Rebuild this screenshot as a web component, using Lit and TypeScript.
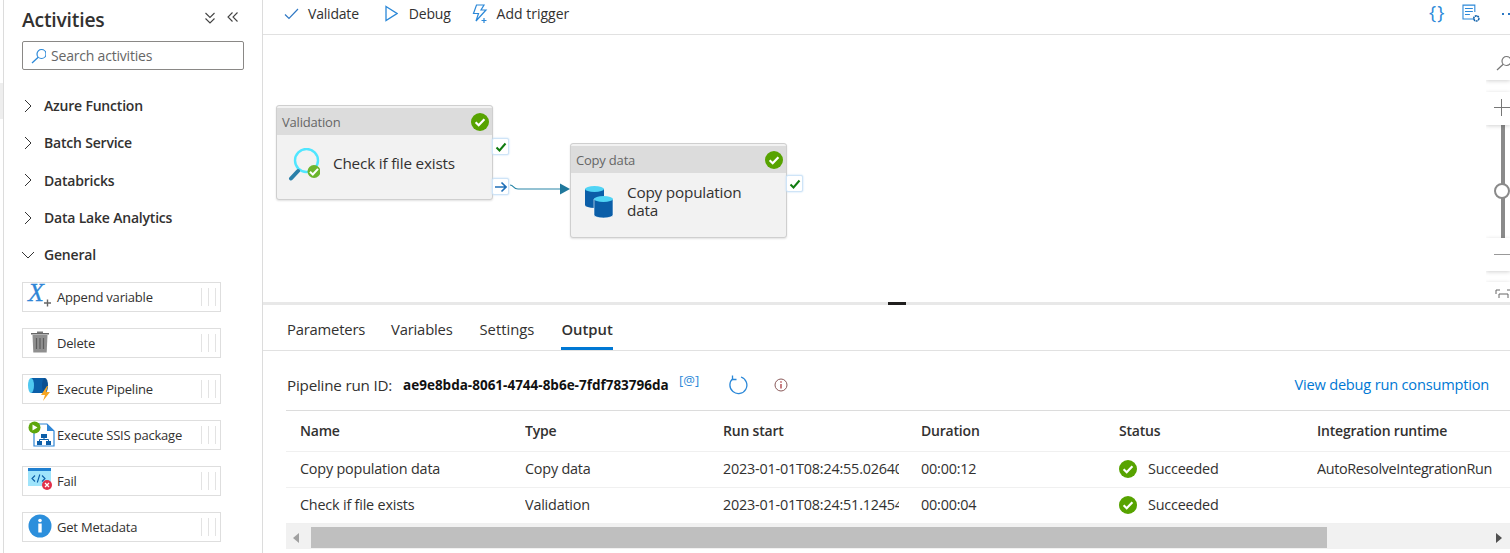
import { LitElement, css, html, svg } from 'lit';
import { customElement } from 'lit/decorators.js';

const groups = ['Azure Function', 'Batch Service', 'Databricks', 'Data Lake Analytics'];

const check = svg`<path d="M-4 0.3 L-1.2 3 L4 -2.6" fill="none" stroke="#fff" stroke-width="2"/>`;

const activityIcons = {
    append: svg`
        <text x="0" y="18" font-family="Liberation Serif, serif" font-style="italic" font-size="26" fill="#2f86d6" stroke="#2f86d6" stroke-width=".3">X</text>
        <path d="M16 20h7M19.500 16.500v7" stroke="#666" stroke-width="1.400" fill="none"/>`,
    delete: svg`
        <path d="M3 4h18v1.500H3z" fill="#666"/><path d="M9 2.500h6V4H9z" fill="#777"/>
        <path d="M4.500 6h15l-.8 17.500H5.300z" fill="#8f8f8f"/>
        <path d="M8.500 9v11M12 9v11M15.500 9v11" stroke="#5c5c5c" stroke-width="1.200"/>`,
    pipeline: svg`
        <g transform="translate(-3 1)">
            <path d="M6 2h14v15H6z" fill="#0b5ea8"/>
            <ellipse cx="6" cy="9.500" rx="3" ry="7.500" fill="#50c8f0"/>
            <ellipse cx="20" cy="9.500" rx="3" ry="7.500" fill="#0a4f91"/>
            <path d="M22 10l-6 9h4l-2 6 7-9h-4l2-6z" fill="#f6a623"/>
        </g>`,
    ssis: svg`
        <path d="M6 3h13l7 7v15H6z" fill="#fff" stroke="#2f86d6" stroke-width="1.200"/>
        <path d="M19 3l7 7h-7z" fill="#2f86d6"/>
        <path d="M13 13h6v4h-6zM9 20h5v4H9zM18 20h5v4h-5z" fill="#0b5ea8"/>
        <path d="M16 17v2M11.500 20v-1.500h9V20" stroke="#0b5ea8" fill="none"/>
        <circle cx="6.500" cy="6.500" r="6" fill="#5ea60c"/><path d="M4.500 3.500v6l5-3z" fill="#fff"/>`,
    fail: svg`
        <path d="M0 1h23v3H0z" fill="#1f7fd0"/><path d="M0 4h23v15H0z" fill="#9fe4fb"/>
        <path d="M7 8.500l-3 3 3 3M14 8.500l3 3-3 3M11.800 7.500l-2.500 8" stroke="#0b5ea8" stroke-width="1.100" fill="none"/>
        <circle cx="19" cy="18" r="5" fill="#e2304a"/>
        <path d="M17 16l4 4M21 16l-4 4" stroke="#fff" stroke-width="1.300"/>`,
    info: svg`
        <circle cx="12" cy="13" r="11.500" fill="#2c8fdc"/>
        <circle cx="12" cy="7.500" r="1.800" fill="#fff"/><path d="M10.300 10.500h3.400v9h-3.400z" fill="#fff"/>`,
};

const activities = [
    ['Append variable', activityIcons.append],
    ['Delete', activityIcons.delete],
    ['Execute Pipeline', activityIcons.pipeline],
    ['Execute SSIS package', activityIcons.ssis],
    ['Fail', activityIcons.fail],
    ['Get Metadata', activityIcons.info],
] as const;

const searchIcon = svg`<circle cx="11.500" cy="6" r="4.500" fill="none" stroke="currentColor" stroke-width="1.200"/><path d="M8.200 9.300L2 15" stroke="currentColor" stroke-width="1.300" fill="none"/>`;

const validationIcon = svg`
    <circle cx="19.500" cy="12.500" r="11.500" fill="none" stroke="#50e6ff" stroke-width="2.400"/>
    <path d="M11 23l-7 7.500" stroke="#2a7fa8" stroke-width="4" stroke-linecap="round"/>
    <circle cx="27" cy="23.500" r="6.500" fill="#6cb52d"/>
    <g transform="translate(27 23.500)">${check}</g>`;

const copyIcon = svg`
    <path d="M0 3h19v16a9.500 3 0 0 1-19 0z" fill="#0b5ea8"/>
    <ellipse cx="9.500" cy="3" rx="9.500" ry="3" fill="#50d4f5"/>
    <path d="M9 13h19v16a9.500 3 0 0 1-19 0z" fill="#0b5ea8" stroke="#fff" stroke-width=".6"/>
    <ellipse cx="18.500" cy="13" rx="9.500" ry="3" fill="#50d4f5"/>`;

const nodes = [
    { x: 276, y: 105, type: 'Validation', label: 'Check if file exists', icon: validationIcon, w: 33, h: 33, left: 11, arrow: true },
    { x: 570, y: 143, type: 'Copy data', label: 'Copy population data', icon: copyIcon, w: 30, h: 34, left: 15, arrow: false },
];

const columns = ['Name', 'Type', 'Run start', 'Duration', 'Status', 'Integration runtime'];
const runs = [
    ['Copy population data', 'Copy data', '2023-01-01T08:24:55.0264083Z', '00:00:12', 'Succeeded', 'AutoResolveIntegrationRun'],
    ['Check if file exists', 'Validation', '2023-01-01T08:24:51.1245491Z', '00:00:04', 'Succeeded', ''],
];

@customElement('app-root')
export class AppRoot extends LitElement {
    renderSideButtons(arrow: boolean) {
        return html`
            <div class="side-btn ok">
                <svg width="12" height="12" viewBox="0 0 12 12"><path d="M1.500 6.500L4.500 9.500L10.500 2.500" fill="none" stroke="#107c10" stroke-width="2"/></svg>
            </div>
            ${arrow ? html`<div class="side-btn go">
                <svg width="12" height="12" viewBox="0 0 12 12"><path d="M0 6h11M6.500 1.500L11 6l-4.500 4.500" fill="none" stroke="#1f6fb8" stroke-width="1.600"/></svg>
            </div>` : ''}`;
    }

    renderNode(n: (typeof nodes)[number]) {
        return html`
            <div class="node ${n.arrow ? 'short' : 'long'}" style="left:${n.x}px;top:${n.y}px">
                <div class="node-head">
                    <span>${n.type}</span>
                    <svg width="18" height="18" viewBox="-9 -9 18 18"><circle r="9" fill="#57a300"/><g transform="scale(1.100)">${check}</g></svg>
                </div>
                <div class="node-body">
                    <svg class="node-icon" style="margin-left:${n.left - 1}px" width="${n.w}" height="${n.h}" viewBox="0 0 ${n.w} ${n.h}">${n.icon}</svg>
                    <div class="node-label">${n.label}</div>
                </div>
                ${this.renderSideButtons(n.arrow)}
            </div>`;
    }

    render() {
        return html`
            <aside class="sidebar">
                <div class="title-row">
                    <h1>Activities</h1>
                    <svg class="collapse" width="34" height="14" viewBox="0 0 34 14">
                        <path d="M1.500 2l4.500 4.500L10.500 2M1.500 7.500L6 12l4.500-4.500M28.500 1.500L24 6l4.500 4.500M33.500 1.500L29 6l4.500 4.500" fill="none" stroke="#444" stroke-width="1.100"/>
                    </svg>
                </div>
                <label class="search">
                    <svg width="16" height="16" viewBox="0 0 16 16">${searchIcon}</svg>
                    <span>Search activities</span>
                </label>
                <div class="groups">
                    ${groups.map((g) => html`
                        <div class="group">
                            <svg width="12" height="14" viewBox="0 0 12 14"><path d="M3 1l6 6-6 6" fill="none" stroke="#333" stroke-width="1"/></svg>
                            <span>${g}</span>
                        </div>`)}
                    <div class="group">
                        <svg width="12" height="14" viewBox="0 0 12 14"><path d="M0 4l6 6 6-6" fill="none" stroke="#333" stroke-width="1"/></svg>
                        <span>General</span>
                    </div>
                </div>
                <div class="items">
                    ${activities.map(([name, icon]) => html`
                        <div class="item">
                            <svg class="item-icon" width="26" height="26" viewBox="0 0 26 26">${icon}</svg>
                            <span>${name}</span>
                            <i class="grip"></i>
                        </div>`)}
                </div>
            </aside>
            <main class="main">
                <div class="toolbar">
                    <div class="tool first">
                        <svg width="15" height="12" viewBox="0 0 15 12"><path d="M1 6.500L5 10.500L14 1" fill="none" stroke="#2f78c4" stroke-width="1.200"/></svg>
                        <span>Validate</span>
                    </div>
                    <div class="tool second">
                        <svg width="13" height="17" viewBox="0 0 13 17"><path d="M1 1.500L12 8.500L1 15.500z" fill="none" stroke="#2b88d8" stroke-width="1.300"/></svg>
                        <span>Debug</span>
                    </div>
                    <div class="tool tight">
                        <svg width="17" height="20" viewBox="0 0 17 20"><path d="M4.500 1h7.500l-3 5h5L4 17l2.500-7.500H1.500zM12 14v5M9.500 16.500h5" fill="none" stroke="#2b88d8" stroke-width="1.200"/></svg>
                        <span>Add trigger</span>
                    </div>
                    <div class="tool-right">
                        <span class="braces">{}</span>
                        <svg width="19" height="19" viewBox="0 0 19 19">
                            <path d="M13 15H1V1h12v7M3 4.500h8M3 7.500h8M3 10.500h5" fill="none" stroke="#2b88d8" stroke-width="1.100"/>
                            <circle cx="14.500" cy="14.500" r="2.600" fill="none" stroke="#0b5ea8" stroke-width="1.600" stroke-dasharray="2 .6"/>
                        </svg>
                        <span class="more"><i></i><i></i></span>
                    </div>
                </div>
                <div class="canvas">
                    <svg class="wire" width="64" height="16" viewBox="0 0 64 16">
                        <path d="M0 4C4 4 3 8 8 8H52" fill="none" stroke="#2a86a8" stroke-width="1.200"/>
                        <path d="M50 2.500L60 8L50 13.500z" fill="#20789c"/>
                    </svg>
                    ${nodes.map((n) => this.renderNode(n))}
                    <div class="zoom-tools">
                        <div class="zoom-btn search-btn">
                            <svg width="16" height="16" viewBox="0 0 16 16" style="color:#777">${searchIcon}</svg>
                        </div>
                        <div class="zoom-btn plus"><i></i><b></b></div>
                        <div class="track"><span class="thumb"></span></div>
                        <div class="zoom-btn minus"><i></i></div>
                        <div class="zoom-btn fit">
                            <svg width="17" height="15" viewBox="0 0 17 15"><path d="M1 5V1h4M12 1h4M4 13V5h9v8" fill="none" stroke="#666" stroke-width="1"/></svg>
                        </div>
                    </div>
                </div>
                <div class="splitter"><span></span></div>
                <div class="tabs">
                    <span class="tab">Parameters</span>
                    <span class="tab">Variables</span>
                    <span class="tab settings">Settings</span>
                    <span class="tab active">Output</span>
                </div>
                <div class="run-row">
                    <span class="run-label">Pipeline run ID:</span>
                    <span class="run-id">ae9e8bda-8061-4744-8b6e-7fdf783796da</span>
                    <span class="at">[@]</span>
                    <svg class="refresh" width="20" height="20" viewBox="0 0 20 20">
                        <path d="M5 3.500A8.500 8.500 0 1 0 13 2" fill="none" stroke="#2b88d8" stroke-width="1.300"/>
                        <path d="M4.500 0.500V4.500H8.500" fill="none" stroke="#2b88d8" stroke-width="1.300"/>
                    </svg>
                    <svg class="info" width="14" height="14" viewBox="0 0 14 14">
                        <circle cx="7" cy="7" r="6" fill="none" stroke="#8a5a5a" stroke-width="1"/>
                        <path d="M7 6v4.500" stroke="#a4262c" stroke-width="1.200"/><circle cx="7" cy="4" r=".8" fill="#a4262c"/>
                    </svg>
                    <a class="consumption">View debug run consumption</a>
                </div>
                <div class="table">
                    <div class="row head">${columns.map((c) => html`<div class="cell">${c}</div>`)}</div>
                    ${runs.map((r) => html`
                        <div class="row">
                            ${r.map((v, i) => i === 4
                                ? html`<div class="cell status">
                                    <svg width="18" height="18" viewBox="-9 -9 18 18"><circle r="9" fill="#57a300"/><g transform="scale(1.100)">${check}</g></svg>
                                    <span>${v}</span>
                                </div>`
                                : html`<div class="cell">${v}</div>`)}
                        </div>`)}
                    <div class="scrollbar">
                        <span class="arrow left"></span>
                        <span class="bar"></span>
                        <span class="arrow right"></span>
                    </div>
                </div>
            </main>
            <span class="edge"></span>
        `;
    }

    static override styles = css`
        :host {
            display: flex;
            position: relative;
            width: 1510px;
            height: 553px;
            overflow: hidden;
            background: #fff;
            font-family: 'Open Sans', 'Noto Sans', sans-serif;
            color: #323130;
            letter-spacing: -0.2px;
        }

        .edge {
            position: absolute;
            left: 0;
            top: 83px;
            width: 3px;
            height: 36px;
            background: #eeeeee;
        }

        .sidebar {
            box-sizing: border-box;
            flex: 0 0 260px;
            margin-left: 3px;
            padding-left: 18px;
            border-left: 1px solid #dcdcdc;
            border-right: 1px solid #dcdcdc;
        }

        .title-row {
            display: flex;
            align-items: center;
            height: 41px;
            padding-bottom: 2px;
            box-sizing: border-box;
        }

        h1 {
            margin: 0;
            font-size: 19.3px;
            font-weight: 600;
        }

        .collapse {
            margin: 0 24px 4px auto;
        }

        .search {
            box-sizing: border-box;
            display: flex;
            align-items: center;
            gap: 5px;
            width: 222px;
            height: 29px;
            padding-left: 7px;
            border: 1px solid #8a8886;
            border-radius: 2px;
            color: #666;
            font-size: 14px;
        }

        .search svg {
            color: #2b88d8;
        }

        .groups {
            margin-top: 17px;
        }

        .group {
            display: flex;
            align-items: center;
            gap: 10px;
            height: 37.3px;
            font-size: 14px;
            font-weight: 600;
        }

        .group svg {
            flex: none;
        }

        .items {
            display: flex;
            flex-direction: column;
            gap: 16px;
            margin-top: 9px;
        }

        .item {
            box-sizing: border-box;
            position: relative;
            display: flex;
            align-items: center;
            gap: 3px;
            width: 199px;
            height: 30px;
            padding-left: 5px;
            border: 1px solid #dedede;
            font-size: 13px;
        }

        .item-icon {
            flex: none;
            margin-top: -2px;
            overflow: visible;
        }

        .grip {
            margin-left: auto;
            margin-right: 4px;
            width: 13px;
            height: 18px;
            border-left: 1px solid #e3e3e3;
            border-right: 1px solid #e3e3e3;
            background: linear-gradient(#e3e3e3, #e3e3e3) center / 1px 100% no-repeat;
        }

        .main {
            flex: 1;
            min-width: 0;
            display: flex;
            flex-direction: column;
        }

        .toolbar {
            box-sizing: border-box;
            display: flex;
            align-items: center;
            flex: 0 0 35px;
            padding: 0 0 7px 21px;
            border-bottom: 1px solid #e1e1e1;
            font-size: 14px;
        }

        .tool {
            display: flex;
            align-items: center;
            gap: 11px;
            margin-right: 25px;
        }

        .tool.first {
            gap: 9px;
            margin-right: 26px;
        }

        .tool.tight {
            gap: 8px;
            margin-right: 0;
            margin-left: -4px;
            letter-spacing: 0;
        }

        .tool-right {
            display: flex;
            align-items: center;
            margin-left: auto;
            gap: 17px;
            width: 81px;
        }

        .braces {
            color: #2b88d8;
            font-size: 19px;
            letter-spacing: 1px;
            line-height: 20px;
            margin-top: -4px;
        }

        .more {
            display: flex;
            gap: 4px;
            margin-left: 4px;
        }

        .more i {
            width: 2px;
            height: 2px;
            background: #2b78c4;
        }

        .canvas {
            flex: 0 0 267px;
            overflow: hidden;
        }

        .wire {
            position: absolute;
            left: 510px;
            top: 181px;
        }

        .node {
            position: absolute;
            box-sizing: border-box;
            width: 217px;
            height: 95px;
            padding-top: 2px;
            background: #f2f2f2;
            border: 1px solid #cfcfcf;
            border-radius: 3px;
            box-shadow: 0 1px 2px rgba(0, 0, 0, 0.12);
        }

        .node-head {
            display: flex;
            align-items: center;
            justify-content: space-between;
            height: 27px;
            padding: 0 3px 0 5px;
            background: #dcdcdc;
            color: #666;
            font-size: 13px;
        }

        .node-head span {
            margin-top: 0;
        }

        .node-body {
            display: flex;
            align-items: center;
            height: 58px;
        }

        .node-icon {
            flex: none;
        }

        .node.long .node-icon {
            margin-top: 2px;
        }

        .node-label {
            position: absolute;
            left: 56px;
            width: 140px;
            margin-top: -2px;
            font-size: 15.3px;
            line-height: 18px;
        }

        .side-btn {
            position: absolute;
            left: 215px;
            display: flex;
            align-items: center;
            justify-content: center;
            width: 15px;
            height: 15px;
            background: #fff;
            border: 1px solid #cfe4f7;
            border-radius: 2px;
            box-shadow: 0 0 2px #b7d8f5;
        }

        .side-btn.ok {
            top: 32px;
        }

        .side-btn.go {
            top: 72px;
        }

        .node.long .side-btn.ok {
            top: 31px;
        }

        .zoom-tools {
            position: absolute;
            left: 1486px;
            top: 47px;
            width: 24px;
            height: 251px;
            overflow: hidden;
            display: flex;
            flex-direction: column;
        }

        .zoom-btn {
            position: relative;
            flex: none;
            height: 33px;
            background: #fff;
            box-shadow: 0 1px 4px rgba(0, 0, 0, 0.18);
            z-index: 1;
        }

        .search-btn svg {
            position: absolute;
            left: 9px;
            top: 8px;
        }

        .plus {
            margin-top: 12px;
        }

        .plus i,
        .plus b,
        .minus i {
            position: absolute;
            background: #777;
        }

        .plus i {
            left: 8px;
            top: 15px;
            width: 16px;
            height: 1px;
        }

        .plus b {
            left: 15px;
            top: 7px;
            width: 1px;
            height: 17px;
        }

        .track {
            position: relative;
            flex: 0 0 113px;
            margin-left: 15px;
            width: 4px;
            background: #8a8a8a;
        }

        .thumb {
            position: absolute;
            left: -7px;
            top: 58px;
            box-sizing: border-box;
            width: 16px;
            height: 16px;
            border-radius: 50%;
            background: #fff;
            border: 2px solid #8a8a8a;
        }

        .minus i {
            left: 8px;
            top: 16px;
            width: 16px;
            height: 1px;
            background: #999;
        }

        .fit {
            margin-top: 11px;
        }

        .fit svg {
            position: absolute;
            left: 9px;
            top: 7px;
        }

        .splitter {
            position: relative;
            flex: 0 0 3px;
            background: #e8e8e8;
        }

        .splitter span {
            position: absolute;
            left: 625px;
            top: 0;
            width: 18px;
            height: 3px;
            background: #201f1e;
        }

        .tabs {
            box-sizing: border-box;
            display: flex;
            gap: 26px;
            flex: 0 0 45px;
            padding-left: 24px;
            border-bottom: 1px solid #e1e1e1;
            font-size: 14.8px;
        }

        .tab {
            box-sizing: border-box;
            height: 45px;
            padding-top: 14px;
        }

        .tab.settings {
            margin-left: 1px;
            letter-spacing: 0;
        }

        .tab.active {
            margin-left: 1px;
            letter-spacing: 0;
            font-weight: 600;
            border-bottom: 3px solid #0078d4;
        }

        .run-row {
            box-sizing: border-box;
            display: flex;
            align-items: center;
            flex: 0 0 59px;
            padding: 8px 21px 0 24px;
            font-size: 15.2px;
        }

        .run-id {
            margin-left: 11px;
            width: 276px;
            font-size: 13.5px;
            font-weight: 700;
            letter-spacing: 0;
            color: #111;
            white-space: nowrap;
        }

        .at {
            margin-top: -9px;
            color: #2b88d8;
            font-size: 13px;
            letter-spacing: 0;
        }

        .refresh {
            margin-left: 29px;
        }

        .info {
            margin-left: 26px;
        }

        .consumption {
            margin-left: auto;
            margin-top: -2px;
            color: #0078d4;
            font-size: 14.6px;
        }

        .table {
            margin-left: 23px;
            border-top: 1px solid #dcdcdc;
            font-size: 14.4px;
        }

        .row {
            box-sizing: border-box;
            display: grid;
            grid-template-columns: 225px 198px 198px 198px 198px 198px;
            align-items: center;
            height: 36px;
            padding: 0 0 2px 14px;
            border-bottom: 1px solid #f0f0f0;
        }

        .row:last-of-type {
            border-bottom: 0;
        }

        .row.head {
            height: 41px;
            font-weight: 600;
            font-size: 14px;
        }

        .cell {
            margin-right: 22px;
            white-space: nowrap;
            overflow: hidden;
        }

        .row:not(.head) .cell:nth-child(6) {
            letter-spacing: -0.35px;
        }

        .status {
            display: flex;
            align-items: center;
            gap: 11px;
        }

        .scrollbar {
            box-sizing: border-box;
            display: flex;
            align-items: center;
            height: 25px;
            padding: 3px 0 1px;
            background: #f1f1f1;
        }

        .bar {
            width: 1016px;
            height: 21px;
            margin-left: 25px;
            background: #bfbfbf;
        }

        .arrow {
            position: absolute;
            width: 0;
            height: 0;
            border-top: 5px solid transparent;
            border-bottom: 5px solid transparent;
        }

        .arrow.left {
            left: 293px;
            border-right: 6px solid #a0a0a0;
        }

        .arrow.right {
            left: 1496px;
            border-left: 6px solid #505050;
        }
    `;
}

declare global {
    interface HTMLElementTagNameMap {
        'app-root': AppRoot;
    }
}
